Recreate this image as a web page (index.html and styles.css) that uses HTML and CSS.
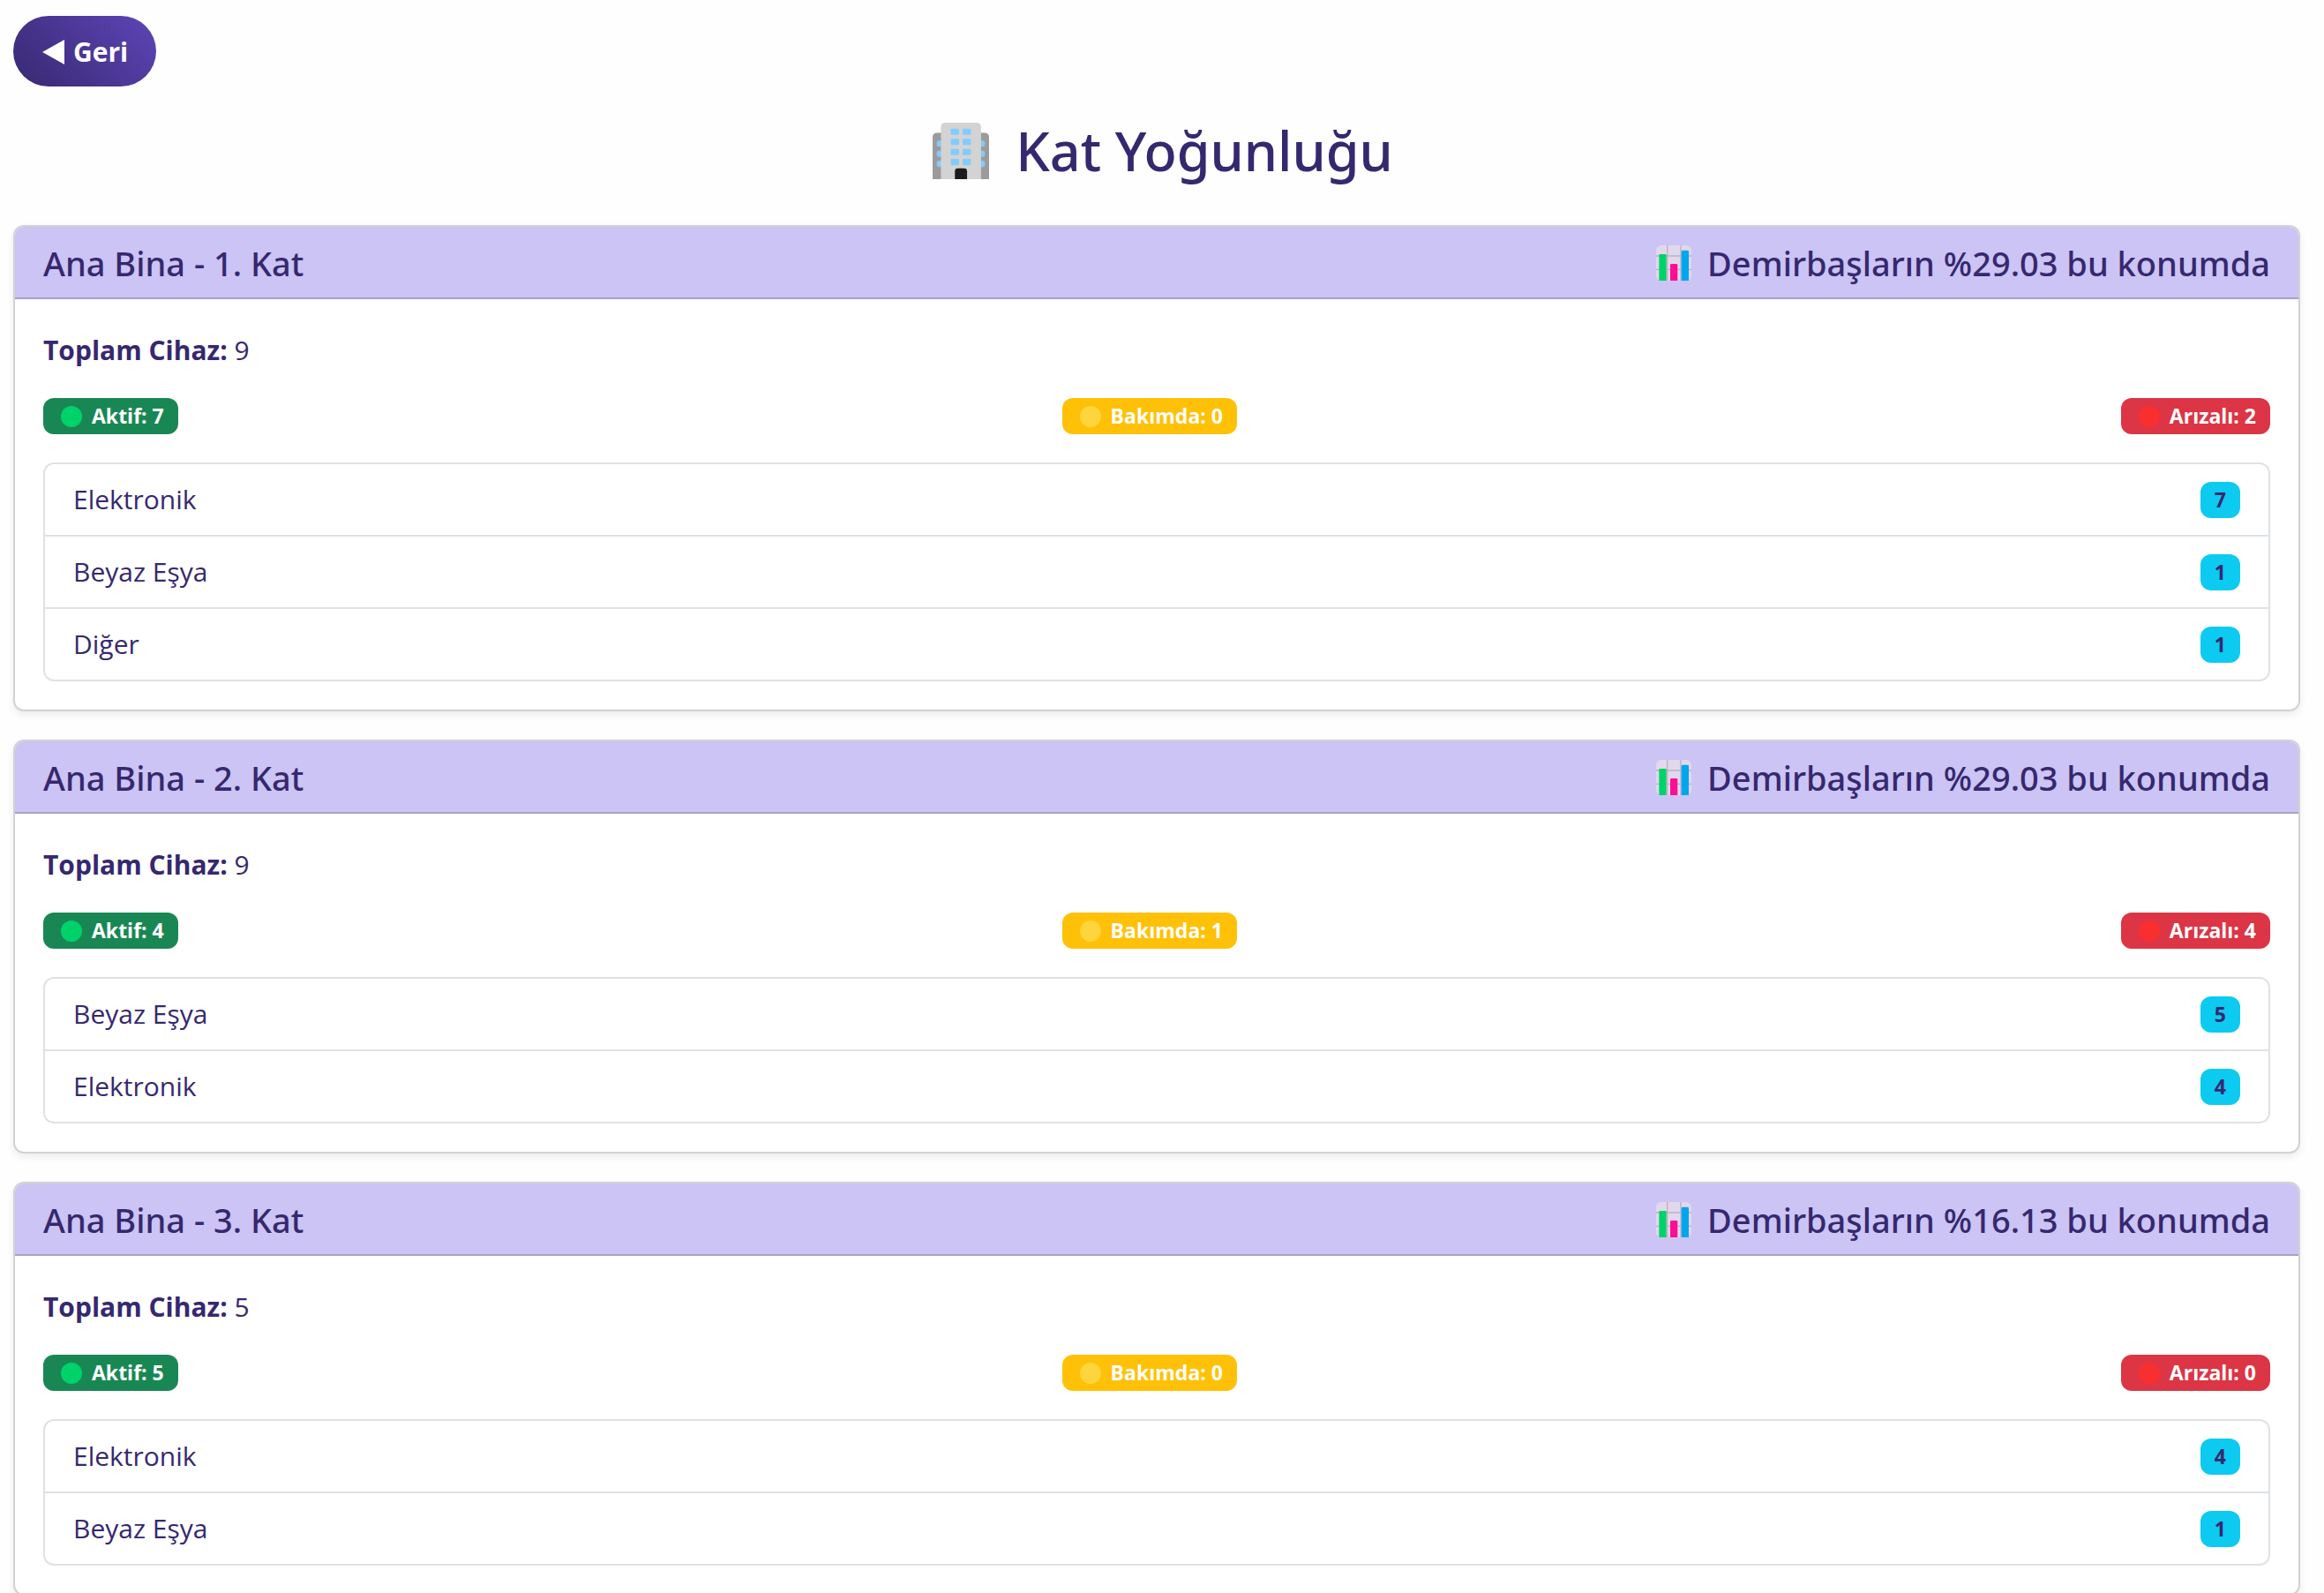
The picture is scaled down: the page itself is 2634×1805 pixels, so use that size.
FILE: index.html
```html
<!DOCTYPE html>
<html lang="tr">
<head>
<meta charset="utf-8">
<meta name="viewport" content="width=device-width, initial-scale=1">
<title>Kat Yoğunluğu</title>
<link rel="stylesheet" href="styles.css">
</head>
<body>
<svg class="defs" width="0" height="0" aria-hidden="true">
  <symbol id="chart" viewBox="0 0 120 120">
    <rect width="120" height="120" rx="17" fill="#e1d8ec"/>
    <path d="M38 0v120M84 0v120M0 36h120M0 82h120" stroke="#b9b1c6" stroke-width="4"/>
    <path d="M10 120V34q0-4 4-4h17q4 0 4 4v86z" fill="#00d26a"/>
    <path d="M48 120V67q0-4 4-4h17q4 0 4 4v53z" fill="#fc0f92"/>
    <path d="M86 120V21q0-4 4-4h17q4 0 4 4v99z" fill="#00a6ed"/>
  </symbol>
</svg>
<main class="page">
  <button class="back" type="button">
    <svg class="back-arrow" viewBox="0 0 25 28" aria-hidden="true"><path d="M0 14L25 0V28z" fill="#fff"/></svg>
    Geri
  </button>

  <h1 class="title">
    <svg class="building" viewBox="0 0 190 190" aria-hidden="true">
      <path d="M0 190V50q0-16 16-16h30v156zM190 190V50q0-16-16-16h-30v156z" fill="#9b9b9b"/>
      <g fill="#83cbff">
        <rect x="14" y="60" width="34" height="21" rx="7"/><rect x="14" y="94" width="34" height="21" rx="7"/><rect x="14" y="128" width="34" height="21" rx="7"/>
        <rect x="142" y="60" width="34" height="21" rx="7"/><rect x="142" y="94" width="34" height="21" rx="7"/><rect x="142" y="128" width="34" height="21" rx="7"/>
      </g>
      <path d="M28 190V16Q28 0 44 0h103q16 0 16 16v174z" fill="#d3d3d3"/>
      <g fill="#83cbff">
        <rect x="61" y="20" width="28" height="21" rx="4"/><rect x="101" y="20" width="28" height="21" rx="4"/>
        <rect x="61" y="54" width="28" height="21" rx="4"/><rect x="101" y="54" width="28" height="21" rx="4"/>
        <rect x="61" y="88" width="28" height="21" rx="4"/><rect x="101" y="88" width="28" height="21" rx="4"/>
        <rect x="61" y="122" width="28" height="21" rx="4"/><rect x="101" y="122" width="28" height="21" rx="4"/>
      </g>
      <path d="M75 190V164q0-10 10-10h21q10 0 10 10v26z" fill="#1c1c1c"/>
    </svg>
    Kat Yoğunluğu
  </h1>

  <section class="card">
    <header class="card-header">
      <h2 class="heading">Ana Bina - 1. Kat</h2>
      <p class="heading"><svg class="chart" aria-hidden="true"><use href="#chart"/></svg>Demirbaşların %29.03 bu konumda</p>
    </header>
    <div class="card-body">
      <p class="total"><strong>Toplam Cihaz:</strong> 9</p>
      <div class="states">
        <span class="badge active">Aktif: 7</span>
        <span class="badge service">Bakımda: 0</span>
        <span class="badge faulty">Arızalı: 2</span>
      </div>
      <ul class="list">
        <li class="item">Elektronik <span class="count">7</span></li>
        <li class="item">Beyaz Eşya <span class="count">1</span></li>
        <li class="item">Diğer <span class="count">1</span></li>
      </ul>
    </div>
  </section>

  <section class="card">
    <header class="card-header">
      <h2 class="heading">Ana Bina - 2. Kat</h2>
      <p class="heading"><svg class="chart" aria-hidden="true"><use href="#chart"/></svg>Demirbaşların %29.03 bu konumda</p>
    </header>
    <div class="card-body">
      <p class="total"><strong>Toplam Cihaz:</strong> 9</p>
      <div class="states">
        <span class="badge active">Aktif: 4</span>
        <span class="badge service">Bakımda: 1</span>
        <span class="badge faulty">Arızalı: 4</span>
      </div>
      <ul class="list">
        <li class="item">Beyaz Eşya <span class="count">5</span></li>
        <li class="item">Elektronik <span class="count">4</span></li>
      </ul>
    </div>
  </section>

  <section class="card">
    <header class="card-header">
      <h2 class="heading">Ana Bina - 3. Kat</h2>
      <p class="heading"><svg class="chart" aria-hidden="true"><use href="#chart"/></svg>Demirbaşların %16.13 bu konumda</p>
    </header>
    <div class="card-body">
      <p class="total"><strong>Toplam Cihaz:</strong> 5</p>
      <div class="states">
        <span class="badge active">Aktif: 5</span>
        <span class="badge service">Bakımda: 0</span>
        <span class="badge faulty">Arızalı: 0</span>
      </div>
      <ul class="list">
        <li class="item">Elektronik <span class="count">4</span></li>
        <li class="item">Beyaz Eşya <span class="count">1</span></li>
      </ul>
    </div>
  </section>
</main>
</body>
</html>
```

FILE: styles.css
```css
* {
  box-sizing: border-box;
  margin: 0;
  padding: 0;
}

body {
  background: #fefefe;
  color: #36286f;
  font-family: "Segoe UI", "Open Sans", "Noto Sans", sans-serif;
  font-size: 30px;
  line-height: 48px;
}

.defs {
  display: block;
}

.page {
  padding: 18px 27px 32px 15px;
}

.back {
  display: flex;
  align-items: center;
  gap: 10px;
  height: 80px;
  padding: 2px 32px 0 33px;
  border: 0;
  border-radius: 40px;
  background: linear-gradient(45deg, #372970, #5e45b8);
  color: #fff;
  font: inherit;
  font-weight: 700;
  cursor: pointer;
}

.back-arrow {
  width: 25px;
  height: 28px;
}

.title {
  display: flex;
  align-items: center;
  justify-content: center;
  gap: 30px;
  margin: 34px 0 43px;
  padding-left: 14px;
  font-family: "Segoe UI", "Noto Sans", sans-serif;
  font-size: 61px;
  font-weight: 500;
  line-height: 78px;
  padding-bottom: 2px;
}

.building {
  width: 64px;
  height: 64px;
}

.card {
  margin-bottom: 32px;
  border: 2px solid #d2d2d2;
  border-radius: 12px;
  background: #fff;
  box-shadow: 0 4px 8px rgba(0, 0, 0, 0.075);
}

.card-header {
  display: flex;
  justify-content: space-between;
  padding: 17px 32px 15px;
  border-bottom: 2px solid #a7a1ca;
  border-radius: 10px 10px 0 0;
  background: #cbc4f4;
}

.heading {
  display: flex;
  align-items: center;
  gap: 18px;
  font-family: "Segoe UI", "Noto Sans", sans-serif;
  font-size: 38px;
  font-weight: 500;
  line-height: 48px;
}

.chart {
  width: 40px;
  height: 40px;
}

.card-body {
  padding: 34px 32px 32px;
}

.states {
  display: flex;
  justify-content: space-between;
  margin: 30px 0 32px;
}

.badge,
.count {
  border-radius: 12px;
  font-size: 23px;
  font-weight: 700;
  line-height: 41px;
}

.badge {
  display: flex;
  align-items: center;
  gap: 11px;
  padding: 0 16px 0 20px;
  color: #fff;
}

.badge::before {
  width: 24px;
  height: 24px;
  border-radius: 50%;
  background: #00d26a;
  content: "";
}

.active {
  background: #198754;
}

.service {
  background: #ffc107;
}

.service::before {
  background: #ffd53e;
}

.faulty {
  background: #dc3545;
}

.faulty::before {
  background: #f92f2f;
}

.list {
  border: 2px solid #dee2e6;
  border-radius: 12px;
  list-style: none;
}

.item {
  display: flex;
  align-items: center;
  justify-content: space-between;
  padding: 16px 32px;
}

.item + .item {
  border-top: 2px solid #dee2e6;
}

.count {
  padding: 0 16px;
  background: #0dcaf0;
}
```
